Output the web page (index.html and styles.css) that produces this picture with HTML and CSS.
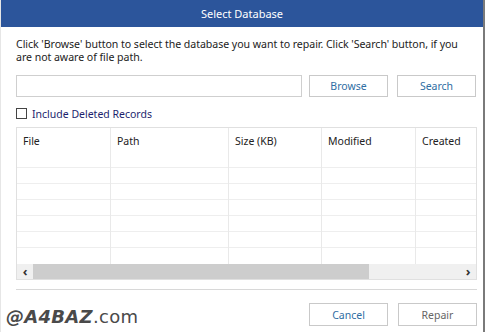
FILE: index.html
```html
<!DOCTYPE html>
<html>
<head>
<meta charset="utf-8">
<link rel="stylesheet" href="styles.css">
</head>
<body>
<div class="window">
  <div class="titlebar">Select Database</div>
  <div class="content">
    <p class="desc">Click 'Browse' button to select the database you want to repair. Click 'Search' button, if you are not aware of file path.</p>
    <div class="pathrow">
      <div class="pathinput"></div>
      <button class="btn">Browse</button>
      <button class="btn">Search</button>
    </div>
    <label class="check"><span class="box"></span><span class="check-label">Include Deleted Records</span></label>
    <div class="table">
      <div class="grid">
        <div class="col c1"><div class="hd">File</div><div class="r"></div><div class="r"></div><div class="r"></div><div class="r"></div><div class="r"></div><div class="r"></div></div>
        <div class="col c2"><div class="hd">Path</div><div class="r"></div><div class="r"></div><div class="r"></div><div class="r"></div><div class="r"></div><div class="r"></div></div>
        <div class="col c3"><div class="hd">Size (KB)</div><div class="r"></div><div class="r"></div><div class="r"></div><div class="r"></div><div class="r"></div><div class="r"></div></div>
        <div class="col c4"><div class="hd">Modified</div><div class="r"></div><div class="r"></div><div class="r"></div><div class="r"></div><div class="r"></div><div class="r"></div></div>
        <div class="col c5"><div class="hd">Created</div><div class="r"></div><div class="r"></div><div class="r"></div><div class="r"></div><div class="r"></div><div class="r"></div></div>
      </div>
      <div class="hscroll">
        <span class="arrow">&lsaquo;</span>
        <div class="track"><div class="thumb"></div></div>
        <span class="arrow">&rsaquo;</span>
      </div>
    </div>
    <div class="sep"></div>
    <div class="footer">
      <button class="btn">Cancel</button>
      <button class="btn disabled">Repair</button>
    </div>
  </div>
  <div class="watermark">@A4BAZ<span class="dom">.com</span></div>
</div>
</body>
</html>
```
FILE: styles.css
```css
html, body {
  margin: 0;
  padding: 0;
  background: #fff;
}
body {
  font-family: "Noto Sans", "Open Sans", sans-serif;
  font-size: 11px;
  color: #222;
}
.window {
  position: relative;
  width: 485px;
  height: 332px;
  box-sizing: border-box;
  border-right: 2px solid #7a7a7a;
  border-left: 1px solid #e6e6e6;
  display: flex;
  flex-direction: column;
  background: #fff;
}
.titlebar {
  height: 27px;
  background: #2c559b;
  color: #fff;
  text-align: center;
  line-height: 27px;
  font-size: 11px;
  flex: none;
}
.content {
  padding: 0 7px 0 15px;
  display: flex;
  flex-direction: column;
}
.desc {
  margin: 11px 0 0;
  line-height: 13px;
  font-size: 10.6px;
  letter-spacing: -0.05px;
}
.pathrow {
  display: flex;
  margin-top: 11px;
  height: 22px;
}
.pathinput {
  width: 286px;
  border: 1px solid #cfcfcf;
  box-sizing: border-box;
}
.btn {
  font-family: inherit;
  font-size: 10.5px;
  color: #2f6ea3;
  background: #fff;
  border: 1px solid #c9c9c9;
  width: 79px;
  height: 22px;
  padding: 0;
  box-sizing: border-box;
}
.pathrow .btn:nth-of-type(1) { margin-left: 7px; }
.pathrow .btn:nth-of-type(2) { margin-left: 9px; }
.check {
  display: flex;
  align-items: center;
  margin-top: 10px;
  height: 13px;
}
.box {
  width: 11px;
  height: 11px;
  border: 1px solid #444;
  box-sizing: border-box;
  background: #fff;
}
.check-label {
  margin-left: 5px;
  color: #1c1f6e;
  font-size: 10.5px;
}
.table {
  margin-top: 7px;
  width: 461px;
  border: 1px solid #e0e0e0;
  box-sizing: border-box;
}
.grid {
  display: flex;
}
.col {
  border-right: 1px solid #e9e9e9;
  box-sizing: border-box;
}
.col.c5 { border-right: none; flex: 1; }
.c1 { width: 94px; }
.c2 { width: 118px; }
.c3 { width: 93px; }
.c4 { width: 94px; }
.hd {
  height: 40px;
  padding: 6px 0 0 6px;
  box-sizing: border-box;
  font-size: 10.5px;
  color: #222;
  border-bottom: 1px solid #eeeeee;
}
.r {
  height: 16px;
  box-sizing: border-box;
  border-bottom: 1px solid #eeeeee;
}
.r:last-child { border-bottom: none; }
.hscroll {
  display: flex;
  align-items: center;
  height: 15px;
  background: #f0f0f0;
}
.arrow {
  width: 16px;
  text-align: center;
  font-size: 13px;
  line-height: 15px;
  color: #333;
  font-weight: bold;
}
.track {
  flex: 1;
  height: 15px;
}
.thumb {
  width: 336px;
  height: 15px;
  background: #cdcdcd;
}
.sep {
  margin-top: 9px;
  width: 461px;
  height: 1px;
  background: #d8d8d8;
}
.footer {
  display: flex;
  justify-content: flex-end;
  gap: 10px;
  margin-top: 13px;
  width: 461px;
}
.footer .btn { height: 23px; }
.btn.disabled { color: #666; }
.watermark {
  position: absolute;
  left: 5px;
  top: 306px;
  font-family: "DejaVu Sans", sans-serif;
  font-weight: bold;
  font-style: italic;
  font-size: 18px;
  color: #4a4a4a;
  letter-spacing: 0.3px;
}
.watermark .dom {
  font-weight: normal;
  font-style: normal;
}
```
